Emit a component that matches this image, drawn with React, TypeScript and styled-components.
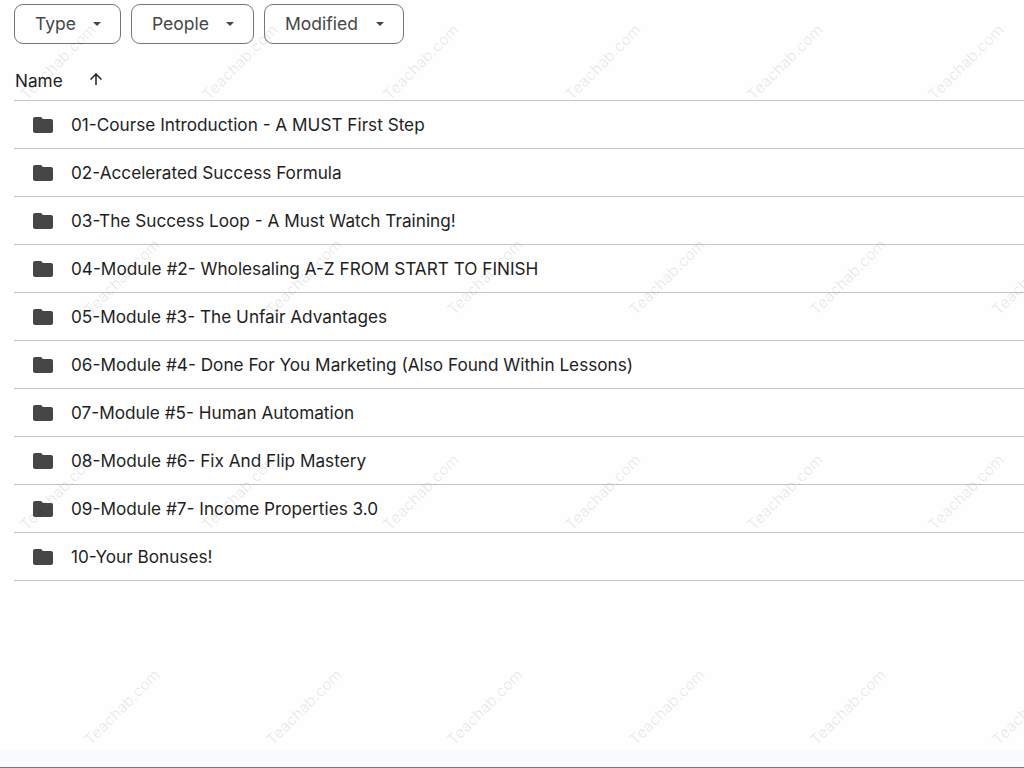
import React from "react";
import styled, { createGlobalStyle } from "styled-components";

const folders = [
    "01-Course Introduction - A MUST First Step",
    "02-Accelerated Success Formula",
    "03-The Success Loop - A Must Watch Training!",
    "04-Module #2- Wholesaling A-Z FROM START TO FINISH",
    "05-Module #3- The Unfair Advantages",
    "06-Module #4- Done For You Marketing (Also Found Within Lessons)",
    "07-Module #5- Human Automation",
    "08-Module #6- Fix And Flip Mastery",
    "09-Module #7- Income Properties 3.0",
    "10-Your Bonuses!",
];

const filters = [
    { label: "Type", width: 107 },
    { label: "People", width: 123 },
    { label: "Modified", width: 140 },
];

const marks: [number, number][] = [58, 240, 421, 603, 785, 966]
    .flatMap((x) => [
        [x, 62],
        [x, 492],
    ] as [number, number][])
    .concat(
        [122, 304, 485, 667, 848, 1030].flatMap((x) => [
            [x, 277],
            [x, 707],
        ] as [number, number][])
    );

const GlobalStyle = createGlobalStyle`
    html, body {
        margin: 0;
        padding: 0;
        background: #fff;
        overflow: hidden;
    }
    body {
        font-family: Inter, Roboto, sans-serif;
    }
`;

const Page = styled.div`
    position: relative;
    width: 1024px;
    height: 768px;
    overflow: hidden;
    display: flex;
    flex-direction: column;
    background: #fefefe;
`;

const Content = styled.main`
    flex: 1;
    padding: 4px 0 0 14px;
`;

const FilterBar = styled.div`
    display: flex;
    gap: 10px;
`;

const FilterButton = styled.button<{ $width: number }>`
    width: ${(p) => p.$width}px;
    height: 40px;
    box-sizing: border-box;
    display: flex;
    align-items: center;
    justify-content: space-between;
    padding: 0 19px 2px 20px;
    background: transparent;
    border: 1px solid #747775;
    border-radius: 9px;
    color: #444746;
    font-family: inherit;
    font-size: 17.5px;
`;

const Caret = styled.span`
    width: 0;
    height: 0;
    margin-top: 2px;
    border-left: 4.5px solid transparent;
    border-right: 4.5px solid transparent;
    border-top: 4px solid #444746;
`;

const HeaderRow = styled.div`
    height: 57px;
    box-sizing: border-box;
    display: flex;
    align-items: flex-end;
    gap: 24px;
    padding: 0 0 9px 1px;
    border-bottom: 1px solid #c7c7c7;
    color: #1f1f1f;
    font-size: 17.2px;
`;

const SortIcon = styled.svg`
    width: 18px;
    height: 18px;
    margin-bottom: 3px;
    fill: #1f1f1f;
`;

const FolderList = styled.ul`
    margin: 0;
    padding: 0;
    list-style: none;
`;

const FolderRow = styled.li`
    height: 48px;
    box-sizing: border-box;
    display: flex;
    align-items: center;
    gap: 16px;
    padding-left: 17px;
    border-bottom: 1px solid #c7c7c7;
    color: #1f1f1f;
    font-size: 17.2px;
`;

const FolderIcon = styled.svg`
    width: 24px;
    height: 24px;
    flex: none;
    fill: #444746;
`;

const FooterBand = styled.div`
    height: 17px;
    background: #f8fafd;
    border-bottom: 1px solid #777;
`;

const Watermark = styled.span<{ $x: number; $y: number }>`
    position: absolute;
    left: ${(p) => p.$x}px;
    top: ${(p) => p.$y}px;
    transform: translate(-50%, -50%) rotate(-45deg);
    color: rgba(0, 0, 0, 0.09);
    font-size: 15.5px;
    white-space: nowrap;
    pointer-events: none;
`;

function App() {
    return (
        <Page>
            <GlobalStyle />
            <Content>
                <FilterBar>
                    {filters.map((f) => (
                        <FilterButton key={f.label} $width={f.width}>
                            {f.label}
                            <Caret />
                        </FilterButton>
                    ))}
                </FilterBar>
                <HeaderRow>
                    Name
                    <SortIcon viewBox="0 0 24 24">
                        <path d="M4 12l1.41 1.41L11 7.83V20h2V7.83l5.58 5.59L20 12l-8-8-8 8z" />
                    </SortIcon>
                </HeaderRow>
                <FolderList>
                    {folders.map((name) => (
                        <FolderRow key={name}>
                            <FolderIcon viewBox="0 0 24 24">
                                <path d="M10 4H4c-1.1 0-2 .9-2 2v12c0 1.1.9 2 2 2h16c1.1 0 2-.9 2-2V8c0-1.1-.9-2-2-2h-8l-2-2z" />
                            </FolderIcon>
                            {name}
                        </FolderRow>
                    ))}
                </FolderList>
            </Content>
            <FooterBand />
            {marks.map(([x, y]) => (
                <Watermark key={`${x}-${y}`} $x={x} $y={y}>
                    Teachab.com
                </Watermark>
            ))}
        </Page>
    );
}

export default App;
